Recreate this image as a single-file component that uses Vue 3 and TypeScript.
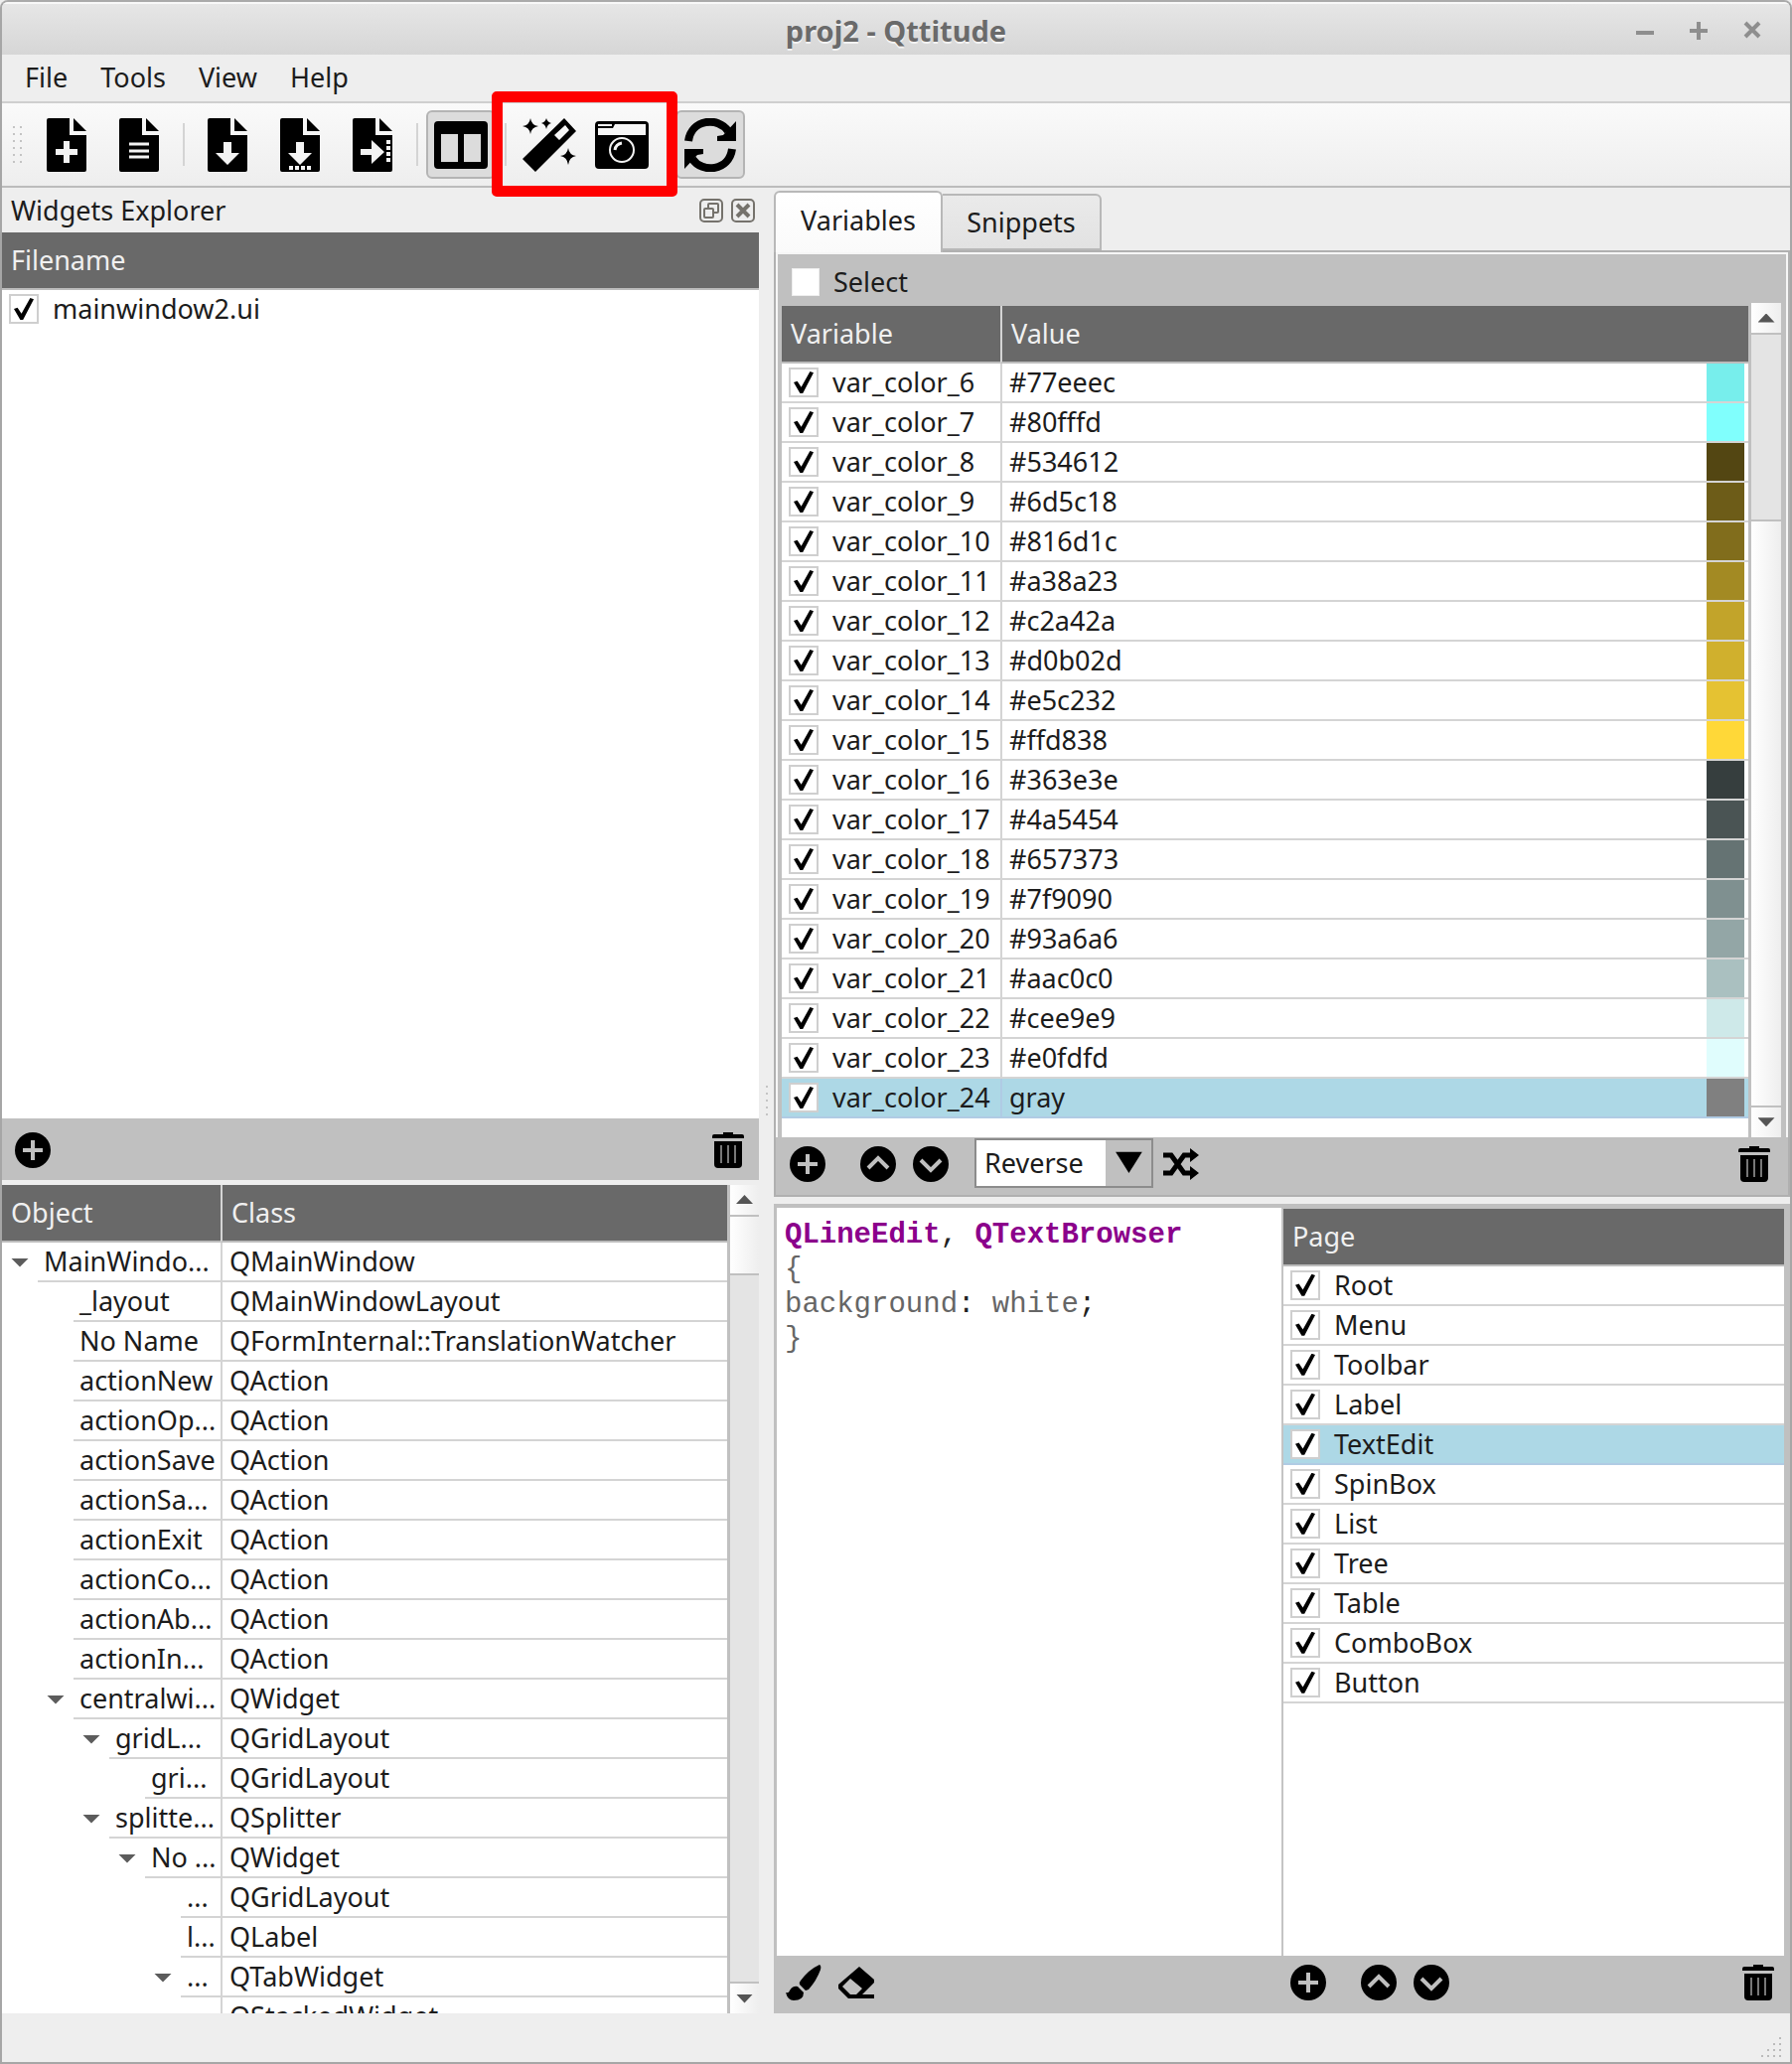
<script setup lang="ts">
import { ref } from 'vue'

interface TreeRow {
  level: number
  open: boolean
  name: string
  cls: string
}
interface Variable {
  name: string
  value: string
}

const menus = ['File', 'Tools', 'View', 'Help']
const tab = ref('Variables')
const order = ref('Reverse')
const selectAll = ref(false)

const row = (level: number, name: string, cls: string, open = false): TreeRow => ({ level, open, name, cls })
const tree: TreeRow[] = [
  row(0, 'MainWindo...', 'QMainWindow', true),
  row(1, '_layout', 'QMainWindowLayout'),
  row(1, 'No Name', 'QFormInternal::TranslationWatcher'),
  row(1, 'actionNew', 'QAction'),
  row(1, 'actionOp...', 'QAction'),
  row(1, 'actionSave', 'QAction'),
  row(1, 'actionSa...', 'QAction'),
  row(1, 'actionExit', 'QAction'),
  row(1, 'actionCo...', 'QAction'),
  row(1, 'actionAb...', 'QAction'),
  row(1, 'actionIn...', 'QAction'),
  row(1, 'centralwi...', 'QWidget', true),
  row(2, 'gridL...', 'QGridLayout', true),
  row(3, 'gri...', 'QGridLayout'),
  row(2, 'splitte...', 'QSplitter', true),
  row(3, 'No ...', 'QWidget', true),
  row(4, '...', 'QGridLayout'),
  row(4, 'l...', 'QLabel'),
  row(4, '...', 'QTabWidget', true),
  row(5, '', 'QStackedWidget'),
]

const values = [
  '#77eeec', '#80fffd', '#534612', '#6d5c18', '#816d1c', '#a38a23', '#c2a42a', '#d0b02d', '#e5c232', '#ffd838',
  '#363e3e', '#4a5454', '#657373', '#7f9090', '#93a6a6', '#aac0c0', '#cee9e9', '#e0fdfd', 'gray',
]
const variables: Variable[] = values.map((value, i) => ({ name: `var_color_${i + 6}`, value }))
const pages = ['Root', 'Menu', 'Toolbar', 'Label', 'TextEdit', 'SpinBox', 'List', 'Tree', 'Table', 'ComboBox', 'Button']
</script>

<template>
  <div class="window">
    <svg class="defs" aria-hidden="true">
      <symbol id="page" viewBox="0 0 40 54">
        <path d="M2 0H23V17H40V52Q40 54 38 54H2Q0 54 0 52V2Q0 0 2 0Z" />
        <path d="M27 0L40 13H27Z" />
      </symbol>
      <symbol id="plus" viewBox="0 0 36 36">
        <circle cx="18" cy="18" r="18" />
        <path d="M18 8V28M8 18H28" fill="none" stroke="#c0c0c0" stroke-width="4" />
      </symbol>
      <symbol id="up" viewBox="0 0 36 36">
        <circle cx="18" cy="18" r="18" />
        <path d="M8 22L18 12L28 22" fill="none" stroke="#c0c0c0" stroke-width="4" />
      </symbol>
      <symbol id="down" viewBox="0 0 36 36">
        <circle cx="18" cy="18" r="18" />
        <path d="M8 14L18 24L28 14" fill="none" stroke="#c0c0c0" stroke-width="4" />
      </symbol>
      <symbol id="trash" viewBox="0 0 32 36">
        <path d="M11 0H21V2H30Q32 2 32 4V6H0V4Q0 2 2 2H11Z" />
        <path d="M2 9H30V32Q30 36 26 36H6Q2 36 2 32Z" />
        <path d="M9 13V31M16 13V31M23 13V31" fill="none" stroke="#777" stroke-width="2" />
      </symbol>
    </svg>

    <header class="titlebar">
      <h1>proj2 - Qttitude</h1>
      <div class="winbtns">
        <button aria-label="Minimize"><svg width="20" height="20" viewBox="0 0 20 20"><path d="M1 12H19" /></svg></button>
        <button aria-label="Maximize"><svg width="20" height="20" viewBox="0 0 20 20"><path d="M1 10H19M10 1V19" /></svg></button>
        <button aria-label="Close"><svg width="20" height="20" viewBox="0 0 20 20"><path d="M3 2L17 16M17 2L3 16" stroke-width="5" /></svg></button>
      </div>
    </header>

    <nav class="menubar">
      <button v-for="m in menus" :key="m">{{ m }}</button>
    </nav>

    <div class="toolbar" role="toolbar">
      <svg class="grip" width="12" height="38" viewBox="0 0 12 38">
        <template v-for="i in 6" :key="i">
          <rect x="1" :y="(i - 1) * 7" width="2" height="2" />
          <rect x="8" :y="(i - 1) * 7" width="2" height="2" />
        </template>
      </svg>
      <button aria-label="New">
        <svg width="40" height="54" viewBox="0 0 40 54"><use href="#page" /><path d="M20 23V45M9 34H31" class="cut" stroke-width="6" /></svg>
      </button>
      <button aria-label="Open">
        <svg width="40" height="54" viewBox="0 0 40 54"><use href="#page" /><path d="M10 26H30M10 33H30M10 39H30" class="cut" stroke-width="3" /></svg>
      </button>
      <span class="sep"></span>
      <button aria-label="Save">
        <svg width="40" height="54" viewBox="0 0 40 54"><use href="#page" /><path d="M16 24H24V35H32L20 47L8 35H16Z" fill="#f3f3f3" /></svg>
      </button>
      <button aria-label="Save as">
        <svg width="40" height="54" viewBox="0 0 40 54"><use href="#page" /><path d="M16 24H24V35H32L20 47L8 35H16Z" fill="#f3f3f3" /><path d="M9 50H32" class="cut" stroke-width="4" stroke-dasharray="4 2" /></svg>
      </button>
      <button aria-label="Export">
        <svg width="40" height="54" viewBox="0 0 40 54"><use href="#page" /><path d="M8 31H19V22L32 34L19 46V37H8Z" fill="#f3f3f3" /><path d="M36 22V46" class="cut" stroke-width="4" stroke-dasharray="4 2" /></svg>
      </button>
      <span class="sep"></span>
      <button class="on" aria-label="Columns">
        <svg width="54" height="48" viewBox="0 0 54 48"><path fill-rule="evenodd" d="M4 0H50Q54 0 54 4V44Q54 48 50 48H4Q0 48 0 44V4Q0 0 4 0ZM7 13V41H24V13ZM30 13V41H47V13Z" /></svg>
      </button>
      <span class="sep"></span>
      <div class="marked">
        <button aria-label="Magic">
          <svg width="54" height="54" viewBox="0 0 54 54">
            <path fill-rule="evenodd" d="M42 0L54 13L13 54L0 41ZM43 7L32 17L37 22L47 12Z" />
            <path d="M8 0Q9 7 16 8Q9 9 8 16Q7 9 0 8Q7 7 8 0ZM24 0Q25 4 29 5Q25 6 24 11Q23 6 19 5Q23 4 24 0ZM46 30Q47 37 54 38Q47 39 46 47Q45 39 38 38Q45 37 46 30Z" />
          </svg>
        </button>
        <button aria-label="Screenshot">
          <svg width="54" height="48" viewBox="0 0 54 48">
            <path fill-rule="evenodd" d="M4 0H50Q54 0 54 4V44Q54 48 50 48H4Q0 48 0 44V4Q0 0 4 0ZM3 3V14H51V3H20L18 7H3Z" />
            <path d="M3 4H17" class="cut" stroke-width="2" />
            <circle cx="27" cy="29" r="12" class="cut" stroke-width="2" />
            <path d="M20 29Q21 23 27 22" class="cut" stroke-width="3" />
          </svg>
        </button>
      </div>
      <span class="sep blank"></span>
      <button class="on" aria-label="Refresh">
        <svg width="54" height="54" viewBox="0 0 54 54">
          <path d="M5 23C8 1 35 -2 45 13M49 31C46 53 19 56 9 41" fill="none" stroke="#000" stroke-width="8" />
          <path d="M53 3V23H34V18L40 17ZM1 51V31H20V36L14 37Z" />
        </svg>
      </button>
    </div>

    <main class="body">
      <section class="left">
        <div class="docktitle">
          <h2>Widgets Explorer</h2>
          <button aria-label="Float">
            <svg width="24" height="24" viewBox="0 0 24 24"><rect x="1" y="1" width="22" height="22" rx="4" /><rect x="9" y="5" width="10" height="9" rx="1" /><rect x="5" y="10" width="9" height="9" rx="1" fill="#eee" /></svg>
          </button>
          <button aria-label="Close dock">
            <svg width="24" height="24" viewBox="0 0 24 24"><rect x="1" y="1" width="22" height="22" rx="4" /><path d="M6 6L18 18M18 6L6 18" stroke-width="4" /></svg>
          </button>
        </div>

        <div class="files">
          <div class="filebody">
            <table>
              <thead><tr><th>Filename</th></tr></thead>
              <tbody><tr><td class="plain"><label class="chk"><input type="checkbox" checked />mainwindow2.ui</label></td></tr></tbody>
            </table>
          </div>
          <div class="bar filebar">
            <button aria-label="Add file"><svg width="36" height="36"><use href="#plus" /></svg></button>
            <button class="end" aria-label="Delete file"><svg width="32" height="36"><use href="#trash" /></svg></button>
          </div>
        </div>

        <div class="objects">
          <div class="treebody">
            <table>
              <colgroup><col class="objcol" /><col /></colgroup>
              <thead><tr><th>Object</th><th>Class</th></tr></thead>
              <tbody>
                <tr v-for="(r, i) in tree" :key="i">
                  <td class="branch">
                    <div class="node" :style="{ marginLeft: r.level * 36 + 'px' }">
                      <span class="arrow" :class="{ open: r.open }"></span><span class="name">{{ r.name }}</span>
                    </div>
                  </td>
                  <td>{{ r.cls }}</td>
                </tr>
              </tbody>
            </table>
          </div>
          <div class="scroll treescroll" aria-hidden="true">
            <span class="step"><i class="tri"></i></span>
            <span class="thumb"></span>
            <span class="track"></span>
            <span class="step"><i class="tri flip"></i></span>
          </div>
        </div>
      </section>

      <div class="splitter" aria-hidden="true"><i v-for="n in 5" :key="n"></i></div>

      <section class="right">
        <div class="tabs" role="tablist">
          <button role="tab" :aria-selected="tab === 'Variables'" :class="{ cur: tab === 'Variables' }" @click="tab = 'Variables'">Variables</button>
          <button role="tab" :aria-selected="tab === 'Snippets'" :class="{ cur: tab === 'Snippets' }" @click="tab = 'Snippets'">Snippets</button>
        </div>
        <div class="pane">
          <div class="selectrow">
            <label class="chk bare"><input v-model="selectAll" type="checkbox" />Select</label>
          </div>
          <div class="vars">
            <div class="varbody">
              <table>
                <colgroup><col class="varcol" /><col /></colgroup>
                <thead><tr><th>Variable</th><th>Value</th></tr></thead>
                <tbody>
                  <tr v-for="v in variables" :key="v.name" :class="{ sel: v.value === 'gray' }">
                    <td><label class="chk"><input type="checkbox" checked />{{ v.name }}</label></td>
                    <td><div class="value">{{ v.value }}<span class="swatch" :style="{ background: v.value }"></span></div></td>
                  </tr>
                </tbody>
              </table>
            </div>
            <div class="scroll varscroll" aria-hidden="true">
              <span class="step"><i class="tri"></i></span>
              <span class="track"></span>
              <span class="thumb"></span>
              <span class="step"><i class="tri flip"></i></span>
            </div>
          </div>
          <div class="bar varbar">
            <button aria-label="Add variable"><svg width="36" height="36"><use href="#plus" /></svg></button>
            <button class="gap" aria-label="Move up"><svg width="36" height="36"><use href="#up" /></svg></button>
            <button aria-label="Move down"><svg width="36" height="36"><use href="#down" /></svg></button>
            <div class="combo">
              <select v-model="order" aria-label="Order"><option>Reverse</option><option>Forward</option></select>
              <span class="drop"></span>
            </div>
            <button aria-label="Shuffle">
              <svg width="36" height="32" viewBox="0 0 36 32">
                <path d="M0 7H8L21 25H28M0 25H8L21 7H28" fill="none" stroke="#000" stroke-width="5" />
                <path d="M27 0L36 7L27 14ZM27 18L36 25L27 32Z" />
              </svg>
            </button>
            <button class="end" aria-label="Delete variable"><svg width="32" height="36"><use href="#trash" /></svg></button>
          </div>
        </div>

        <div class="styles">
          <div class="editrow">
            <pre class="code" contenteditable="true" spellcheck="false"><b>QLineEdit</b><em>,</em> <b>QTextBrowser</b>
{
background<em>:</em> white<em>;</em>
}</pre>
            <div class="pages">
              <table>
                <thead><tr><th>Page</th></tr></thead>
                <tbody>
                  <tr v-for="p in pages" :key="p" :class="{ sel: p === 'TextEdit' }">
                    <td><label class="chk"><input type="checkbox" checked />{{ p }}</label></td>
                  </tr>
                </tbody>
              </table>
            </div>
          </div>
          <div class="botbars">
            <div class="bar brushbar">
              <button aria-label="Brush">
                <svg width="36" height="36" viewBox="0 0 36 36"><path d="M34 0Q36 1 35 5Q31 16 23 25L20 26L14 20Q13 18 15 16Q23 5 34 0ZM12 22L18 28Q18 36 8 36Q2 36 0 28Q3 29 4 26Q7 21 12 22Z" /></svg>
              </button>
              <button aria-label="Eraser">
                <svg width="36" height="32" viewBox="0 0 36 32"><path fill-rule="evenodd" d="M21 0L36 13V16L24 28H36V32H10L0 22V18ZM12 12L4 20L12 28H18L24 22Z" /></svg>
              </button>
            </div>
            <div class="bar pagebar">
              <button aria-label="Add page"><svg width="36" height="36"><use href="#plus" /></svg></button>
              <button class="gap" aria-label="Move page up"><svg width="36" height="36"><use href="#up" /></svg></button>
              <button aria-label="Move page down"><svg width="36" height="36"><use href="#down" /></svg></button>
              <button class="end" aria-label="Delete page"><svg width="32" height="36"><use href="#trash" /></svg></button>
            </div>
          </div>
        </div>
      </section>
    </main>

    <footer class="status">
      <svg width="26" height="26" viewBox="0 0 26 26" aria-hidden="true">
        <template v-for="r in 4" :key="r">
          <rect v-for="c in r" :key="c" :x="25 - c * 6" :y="r * 6 - 3" width="2" height="2" />
        </template>
      </svg>
    </footer>
  </div>
</template>

<style>
body {
  background: #eee;
}
</style>

<style scoped>
* {
  box-sizing: border-box;
}
.window {
  display: flex;
  flex-direction: column;
  height: 100vh;
  border: 2px solid #a6a6a6;
  border-top-color: #aaa;
  border-radius: 8px 8px 0 0;
  background: #eee;
  overflow: hidden;
  font: 27px/38px 'Noto Sans', sans-serif;
  color: #1c1c1c;
}
.defs {
  position: absolute;
  width: 0;
  height: 0;
}
button {
  border: 0;
  padding: 0;
  background: none;
  font: inherit;
  color: inherit;
}
svg {
  display: block;
}
h1,
h2 {
  margin: 0;
  font-size: inherit;
}
.titlebar {
  display: grid;
  grid-template-columns: 1fr auto 1fr;
  align-items: center;
  height: 53px;
  padding: 2px 28px 0;
  background: linear-gradient(#e6e6e6, #d6d6d6);
  border-top: 2px solid #f8f8f8;
}
.titlebar h1 {
  grid-column: 2;
  font-size: 29px;
  color: #6a6a6a;
  text-shadow: 0 2px 0 #f2f2f2;
}
.winbtns {
  display: flex;
  justify-content: flex-end;
  gap: 34px;
}
.winbtns path {
  fill: none;
  stroke: #8e8e8e;
  stroke-width: 4;
}
.menubar {
  display: flex;
  align-items: center;
  gap: 33px;
  height: 49px;
  padding: 0 23px 2px;
  border-bottom: 2px solid #cfcfcf;
}
.toolbar {
  display: flex;
  align-items: center;
  gap: 3px;
  height: 85px;
  padding: 4px 0 4px 10px;
  background: linear-gradient(#fafafa, #eee);
  border-bottom: 2px solid #bcbcbc;
}
.toolbar button {
  display: grid;
  place-items: center;
  width: 70px;
  height: 69px;
  border: 2px solid transparent;
  border-radius: 6px;
}
.toolbar .on {
  background: #dcdcdc;
  border-color: #b4b4b4;
}
.cut {
  fill: none;
  stroke: #f3f3f3;
}
.grip {
  margin-right: 5px;
  fill: #c4c4c4;
}
.sep {
  width: 13px;
  height: 43px;
  background: linear-gradient(#d4d4d4, #d4d4d4) center / 2px 100% no-repeat;
}
.blank {
  background: none;
}
.marked {
  position: relative;
  display: flex;
  gap: 3px;
}
.marked::after {
  content: '';
  position: absolute;
  inset: -19px -21px -18px -23px;
  border: 11px solid #f00;
  border-radius: 5px;
  z-index: 2;
}
.body {
  flex: 1;
  display: flex;
  min-height: 0;
}
.left {
  flex: 762 1 0;
  display: flex;
  flex-direction: column;
  min-width: 0;
}
.docktitle {
  display: flex;
  align-items: center;
  gap: 8px;
  height: 45px;
  padding: 0 4px 0 9px;
}
.docktitle h2 {
  flex: 1;
  font-weight: normal;
}
.docktitle svg {
  fill: none;
  stroke: #75726c;
  stroke-width: 2;
}
table {
  width: 100%;
  table-layout: fixed;
  border-collapse: separate;
  border-spacing: 0;
}
th {
  height: 58px;
  padding: 0 9px;
  background: #696969;
  border-bottom: 2px solid #bcbcbc;
  color: #f0f0f0;
  font-weight: normal;
  text-align: left;
}
th + th,
td + td {
  border-left: 2px solid #d4d4d4;
}
td {
  height: 40px;
  padding: 0 7px;
  border-bottom: 2px solid #d4d4d4;
  line-height: 38px;
  white-space: nowrap;
  overflow: hidden;
}
td.plain {
  border-bottom-color: transparent;
}
.sel td {
  background: #add8e6;
  border-color: #b0cbe4;
}
.chk {
  display: flex;
  align-items: center;
  gap: 14px;
}
.chk input {
  flex: none;
  display: grid;
  place-items: center;
  width: 30px;
  height: 30px;
  margin: 0;
  appearance: none;
  background: #fff;
  border: 2px solid #cfcfcf;
}
.chk input:checked::before {
  content: '';
  width: 20px;
  height: 22px;
  background: #000;
  clip-path: polygon(0 50%, 18% 44%, 38% 72%, 82% 0, 100% 6%, 46% 100%, 32% 100%);
}
.files {
  flex: 953 1 0;
  display: flex;
  flex-direction: column;
  min-height: 0;
}
.filebody {
  flex: 1;
  min-height: 0;
  background: #fff;
}
.bar {
  display: flex;
  align-items: center;
  gap: 17px;
  background: #c0c0c0;
}
.end {
  margin-left: auto;
}
.filebar {
  height: 62px;
  padding: 2px 15px 0 13px;
}
.objects {
  flex: 834 1 0;
  display: flex;
  min-height: 0;
  margin-top: 5px;
  background: #fff;
}
.treebody {
  flex: 1;
  min-width: 0;
  overflow: hidden;
}
.objcol {
  width: 220px;
}
td.branch {
  padding: 0;
  border-bottom: 0;
}
.node {
  display: flex;
  height: 40px;
}
.arrow {
  flex: none;
  width: 36px;
}
.arrow.open::before {
  content: '';
  display: block;
  width: 18px;
  height: 9px;
  margin: 16px 0 0 9px;
  background: #5c5c5c;
  clip-path: polygon(0 0, 100% 0, 50% 100%);
}
.name {
  flex: 1;
  padding-left: 6px;
  border-bottom: 2px solid #d4d4d4;
}
.scroll {
  display: flex;
  flex-direction: column;
  flex: none;
  width: 32px;
  border-left: 3px solid #c0c0c0;
}
.step {
  display: grid;
  place-items: center;
  height: 30px;
  background: linear-gradient(90deg, #fff, #eee);
}
.tri {
  width: 17px;
  height: 9px;
  background: #555;
  clip-path: polygon(50% 0, 100% 100%, 0 100%);
}
.tri.flip {
  clip-path: polygon(0 0, 100% 0, 50% 100%);
}
.track {
  flex: 1;
  background: #e4e4e4;
  border: solid #c0c0c0;
  border-width: 2px 0;
}
.thumb {
  background: linear-gradient(90deg, #fff, #eee);
}
.treescroll .thumb {
  height: 59px;
  border-top: 2px solid #c0c0c0;
}
.varscroll .track {
  flex: 187 1 0;
}
.varscroll .thumb {
  flex: 592 1 0;
  border-bottom: 2px solid #c0c0c0;
}
.splitter {
  width: 15px;
  display: flex;
  flex-direction: column;
  align-items: center;
  justify-content: center;
  gap: 5px;
}
.splitter i {
  width: 2px;
  height: 2px;
  background: #c4c4c4;
}
.right {
  flex: 1023 1 0;
  display: flex;
  flex-direction: column;
  min-width: 0;
}
.tabs {
  display: flex;
  align-items: flex-end;
  height: 63px;
}
.tabs button {
  width: 160px;
  height: 57px;
  background: linear-gradient(#eaeaea, #e2e2e2);
  border: 2px solid #b8b8b8;
  border-left: 0;
  border-radius: 0 6px 0 0;
}
.tabs .cur {
  position: relative;
  z-index: 1;
  width: 170px;
  height: 62px;
  padding-bottom: 4px;
  margin-bottom: -2px;
  background: linear-gradient(#fff, #fafafa);
  border-left: 2px solid #b8b8b8;
  border-bottom: 0;
  border-radius: 6px 6px 0 0;
}
.pane {
  flex: 952 1 0;
  display: flex;
  flex-direction: column;
  min-height: 0;
  border: 2px solid #b0b0b0;
  background: #c0c0c0;
  box-shadow: inset 0 0 0 2px #f6f6f6;
}
.selectrow {
  display: flex;
  align-items: center;
  height: 51px;
  padding: 8px 17px 0 16px;
}
.chk.bare input {
  border: 1px solid #eee;
  width: 28px;
  height: 28px;
}
.vars {
  flex: 1;
  display: flex;
  min-height: 0;
  margin: 0 7px 0 6px;
}
.varbody {
  flex: 1;
  min-width: 0;
  margin-top: 3px;
  background: #fff;
  overflow: hidden;
}
.varcol {
  width: 220px;
}
.value {
  display: flex;
  justify-content: space-between;
}
.swatch {
  width: 38px;
  height: 38px;
  margin-right: -3px;
}
.varscroll {
  width: 33px;
}
.varbar {
  height: 58px;
  padding: 0 18px 4px 14px;
}
.varbar .gap,
.pagebar .gap {
  margin-left: 18px;
}
.combo {
  display: flex;
  width: 180px;
  height: 50px;
  margin: 0 -7px 2px 9px;
  border: 2px solid #8c8c8c;
  background: #c0c0c0;
}
.combo select {
  width: 130px;
  border: 0;
  padding: 0 8px;
  appearance: none;
  background: #fff;
  color: #1c1c1c;
  font: inherit;
}
.drop {
  flex: 1;
  background: #000;
  clip-path: polygon(22% 26%, 80% 26%, 51% 72%);
}
.styles {
  flex: 814 1 0;
  display: flex;
  flex-direction: column;
  min-height: 0;
  margin-top: 7px;
  border: solid #c0c0c0;
  border-width: 4px 6px 0 3px;
  background: #c0c0c0;
}
.editrow,
.botbars {
  display: grid;
  grid-template-columns: minmax(0, 508fr) minmax(0, 506fr);
}
.editrow {
  flex: 1;
  min-height: 0;
}
.code {
  margin: 0;
  padding: 10px 8px;
  background: #fff;
  color: #666;
  font: 29px/35px 'Courier New', 'Liberation Mono', monospace;
}
.code b {
  color: #8b008b;
}
.code em {
  color: #222;
  font-style: normal;
}
.pages {
  border-left: 2px solid #c4c4c4;
  border-top: 1px solid #c0c0c0;
  background: #fff;
}
.botbars {
  height: 58px;
  padding-bottom: 4px;
}
.brushbar {
  padding-left: 9px;
}
.pagebar {
  padding: 0 10px 0 9px;
}
.status {
  display: flex;
  justify-content: flex-end;
  align-items: flex-end;
  height: 49px;
  padding: 0 4px 2px;
}
.status svg {
  fill: #bbb;
}
</style>
